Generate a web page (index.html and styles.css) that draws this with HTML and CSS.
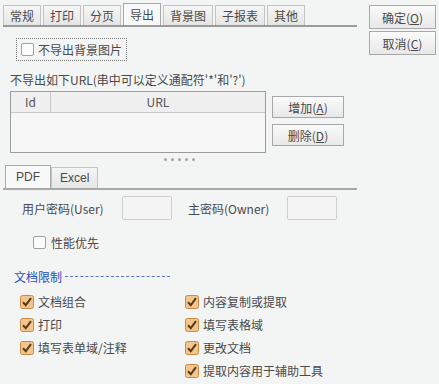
FILE: index.html
```html
<!DOCTYPE html>
<html lang="zh">
<head>
<meta charset="UTF-8">
<title>导出</title>
<link rel="stylesheet" href="styles.css">
</head>
<body>
  <div class="dialog">
    <div class="main">
      <div class="tabs">
        <span class="tab">常规</span>
        <span class="tab">打印</span>
        <span class="tab">分页</span>
        <span class="tab active">导出</span>
        <span class="tab">背景图</span>
        <span class="tab">子报表</span>
        <span class="tab">其他</span>
      </div>

      <div class="panel">
        <label class="focus-check"><span class="box"></span>不导出背景图片</label>

        <div class="url-label">不导出如下URL(串中可以定义通配符'*'和'?')</div>
        <div class="url-row">
          <div class="grid">
            <div class="grid-head">
              <span class="col-id">Id</span>
              <span class="col-url">URL</span>
            </div>
          </div>
          <div class="side-btns">
            <button class="btn">增加(<u>A</u>)</button>
            <button class="btn">删除(<u>D</u>)</button>
          </div>
        </div>
        <div class="splitter"><i></i><i></i><i></i><i></i><i></i></div>

        <div class="subtabs">
          <span class="subtab active">PDF</span>
          <span class="subtab">Excel</span>
        </div>
        <div class="pwd-row">
          <span class="pwd-label">用户密码(User)</span>
          <span class="input"></span>
          <span class="pwd-label owner">主密码(Owner)</span>
          <span class="input"></span>
        </div>
        <label class="plain-check"><span class="box"></span>性能优先</label>

        <div class="section">文档限制 <span class="dash"></span></div>
        <div class="checks">
          <label class="check"><svg width="14" height="14" viewBox="0 0 14 14"><rect x="0.5" y="0.5" width="13" height="13" rx="2" fill="#f3c48c" stroke="#c98a45"/><path d="M3 7.2 L5.8 10.2 L11 3.2" fill="none" stroke="#5a3a1a" stroke-width="2"/></svg>文档组合</label>
          <label class="check"><svg width="14" height="14" viewBox="0 0 14 14"><rect x="0.5" y="0.5" width="13" height="13" rx="2" fill="#f3c48c" stroke="#c98a45"/><path d="M3 7.2 L5.8 10.2 L11 3.2" fill="none" stroke="#5a3a1a" stroke-width="2"/></svg>内容复制或提取</label>
          <label class="check"><svg width="14" height="14" viewBox="0 0 14 14"><rect x="0.5" y="0.5" width="13" height="13" rx="2" fill="#f3c48c" stroke="#c98a45"/><path d="M3 7.2 L5.8 10.2 L11 3.2" fill="none" stroke="#5a3a1a" stroke-width="2"/></svg>打印</label>
          <label class="check"><svg width="14" height="14" viewBox="0 0 14 14"><rect x="0.5" y="0.5" width="13" height="13" rx="2" fill="#f3c48c" stroke="#c98a45"/><path d="M3 7.2 L5.8 10.2 L11 3.2" fill="none" stroke="#5a3a1a" stroke-width="2"/></svg>填写表格域</label>
          <label class="check"><svg width="14" height="14" viewBox="0 0 14 14"><rect x="0.5" y="0.5" width="13" height="13" rx="2" fill="#f3c48c" stroke="#c98a45"/><path d="M3 7.2 L5.8 10.2 L11 3.2" fill="none" stroke="#5a3a1a" stroke-width="2"/></svg>填写表单域/注释</label>
          <label class="check"><svg width="14" height="14" viewBox="0 0 14 14"><rect x="0.5" y="0.5" width="13" height="13" rx="2" fill="#f3c48c" stroke="#c98a45"/><path d="M3 7.2 L5.8 10.2 L11 3.2" fill="none" stroke="#5a3a1a" stroke-width="2"/></svg>更改文档</label>
          <span></span>
          <label class="check"><svg width="14" height="14" viewBox="0 0 14 14"><rect x="0.5" y="0.5" width="13" height="13" rx="2" fill="#f3c48c" stroke="#c98a45"/><path d="M3 7.2 L5.8 10.2 L11 3.2" fill="none" stroke="#5a3a1a" stroke-width="2"/></svg>提取内容用于辅助工具</label>
        </div>
      </div>
    </div>

    <div class="actions">
      <button class="btn wide">确定(<u>O</u>)</button>
      <button class="btn wide">取消(<u>C</u>)</button>
    </div>
  </div>
</body>
</html>
```

FILE: styles.css
```css
body {
  margin: 0;
  padding: 0;
  background-color: #f3f4f4;
  color: #4a4a4a;
  font-family: 'Noto Sans CJK SC', 'Noto Sans', sans-serif;
  font-size: 12px;
}

.dialog {
  display: flex;
  width: 439px;
  height: 384px;
  overflow: hidden;
}

.main {
  width: 360px;
  padding: 3px 0 0 3px;
}

/* top tab strip */
.tabs {
  display: flex;
  align-items: flex-end;
  height: 22px;
  border-bottom: 2px solid #9a9a9a;
  width: 354px;
}

.tab {
  height: 19px;
  line-height: 19px;
  padding: 0 6px;
  margin-right: 2px;
  border: 1px solid #c4c4c4;
  border-bottom: none;
  background: linear-gradient(#f6f6f6, #e4e5e5);
}

.tab.active {
  height: 21px;
  line-height: 21px;
  background: #f8f8f8;
  border-color: #a8a8a8;
}

.focus-check {
  display: inline-flex;
  align-items: center;
  gap: 4px;
  margin: 11px 0 0 13px;
  padding: 2px 4px;
  height: 17px;
  border: 1px dotted #777;
}

.box {
  display: inline-block;
  width: 11px;
  height: 11px;
  border: 1px solid #a0a0a0;
  border-radius: 2px;
  background: #fbfbfb;
}

.url-label {
  margin: 11px 0 0 7px;
  line-height: 16px;
}

.url-row {
  display: flex;
  gap: 6px;
  margin: 3px 0 0 7px;
}

.grid {
  width: 254px;
  height: 60px;
  border: 1px solid #9c9c9c;
  background: #f6f6f6;
}

.grid-head {
  display: flex;
  height: 20px;
  line-height: 20px;
  border-bottom: 1px solid #c8c8c8;
  background: #efefef;
  color: #555;
}

.col-id {
  width: 39px;
  text-align: center;
  border-right: 1px solid #c8c8c8;
}

.col-url {
  flex: 1;
  text-align: center;
}

.side-btns {
  display: flex;
  flex-direction: column;
  gap: 6px;
  padding-top: 5px;
}

.btn {
  width: 72px;
  height: 22px;
  padding: 0;
  border: 1px solid #a8a8a8;
  background: linear-gradient(#fafafa, #e8e8e8);
  font-family: inherit;
  font-size: 12px;
  color: #4a4a4a;
}

.btn.wide {
  width: 67px;
  height: 24px;
}

.actions {
  display: flex;
  flex-direction: column;
  gap: 2px;
  padding: 5px 0 0 6px;
}

/* splitter grip */
.splitter {
  display: flex;
  justify-content: center;
  gap: 4px;
  width: 352px;
  margin: 5px 0 0 0;
  height: 3px;
}

.splitter i {
  width: 3px;
  height: 3px;
  border-radius: 50%;
  background: #a4a4a4;
}

.subtabs {
  display: flex;
  align-items: flex-end;
  height: 23px;
  margin-top: 4px;
  width: 354px;
  border-bottom: 2px solid #a8a8a8;
}

.subtab {
  height: 20px;
  line-height: 20px;
  padding: 0 8px;
  border: 1px solid #c4c4c4;
  border-bottom: none;
  background: linear-gradient(#f4f4f4, #e6e6e6);
  font-family: 'Liberation Sans', sans-serif;
}

.subtab.active {
  height: 22px;
  line-height: 22px;
  padding: 0 10px;
  margin-left: 2px;
  background: #f8f8f8;
  border-color: #a8a8a8;
}

.pwd-row {
  display: flex;
  align-items: center;
  margin: 6px 0 0 19px;
  height: 24px;
}

.pwd-label {
  width: 100px;
}

.pwd-label.owner {
  width: 99px;
  margin-left: 16px;
}

.input {
  width: 48px;
  height: 22px;
  border: 1px solid #cfcfcf;
  border-radius: 2px;
  background: #f4f4f4;
}

.plain-check {
  display: flex;
  align-items: center;
  gap: 5px;
  margin: 14px 0 0 30px;
}

.section {
  display: flex;
  align-items: center;
  gap: 3px;
  margin: 17px 0 0 11px;
  color: #2a4db5;
}

.dash {
  width: 105px;
  border-top: 1px dashed #5a74c8;
}

.checks {
  display: grid;
  grid-template-columns: 165px auto;
  row-gap: 6px;
  margin: 8px 0 0 17px;
}

.check {
  display: flex;
  align-items: center;
  gap: 4px;
  height: 17px;
}
```
